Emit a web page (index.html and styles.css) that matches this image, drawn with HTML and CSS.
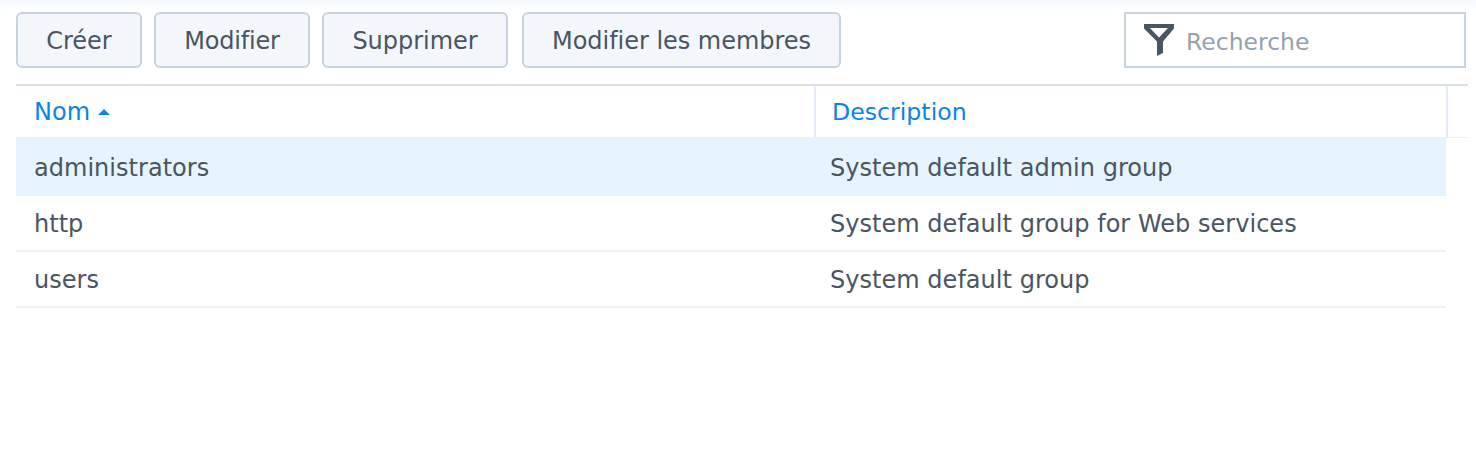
FILE: index.html
```html
<!DOCTYPE html>
<html lang="fr">
<head>
<meta charset="utf-8">
<title>Groupes</title>
<link rel="stylesheet" href="styles.css">
</head>
<body>
<div class="toolbar">
  <div class="buttons">
    <button class="btn btn-create">Créer</button>
    <button class="btn btn-edit">Modifier</button>
    <button class="btn btn-delete">Supprimer</button>
    <button class="btn btn-members">Modifier les membres</button>
  </div>
  <div class="search">
    <svg class="filter" viewBox="0 0 30 32" width="30" height="32"><path d="M0 0H30V4.500L19 17.500V29L13 32V17.500L0 4.500Z M6 4L15 13.500L24 4Z" fill="#4a5562" fill-rule="evenodd"/></svg>
    <span class="placeholder">Recherche</span>
  </div>
</div>
<div class="grid">
  <div class="head">
    <div class="hcell col-name">Nom<span class="sort"></span></div>
    <div class="hcell col-desc">Description</div>
    <div class="hcell col-end"></div>
  </div>
  <div class="row selected"><div class="col-name">administrators</div><div class="col-desc">System default admin group</div></div>
  <div class="row"><div class="col-name">http</div><div class="col-desc">System default group for Web services</div></div>
  <div class="row"><div class="col-name">users</div><div class="col-desc">System default group</div></div>
</div>
</body>
</html>
```
FILE: styles.css
```css
* { box-sizing: border-box; }
html, body { margin: 0; height: 456px; overflow: hidden; }
body {
  padding: 12px 8px 0 16px;
  background: linear-gradient(#f5f9fd 0, #fff 12px);
  font-family: "DejaVu Sans", sans-serif;
  font-size: 24px;
  color: #4a5562;
}
.toolbar { display: flex; justify-content: space-between; height: 56px; padding-right: 2px; }
.buttons { display: flex; gap: 12px; }
.btn {
  height: 56px;
  padding: 2px 0 0;
  border: 2px solid #c8d3e0;
  border-radius: 6px;
  background: #f3f7fb;
  font: inherit;
  letter-spacing: -0.03px;
  color: inherit;
}
.btn-create { width: 126px; }
.btn-edit { width: 156px; letter-spacing: -0.2px; }
.btn-delete { width: 186px; }
.btn-members { width: 319px; margin-left: 2px; }
.search {
  display: flex;
  align-items: center;
  gap: 12px;
  width: 342px;
  border: 2px solid #c8d3e0;
  padding-left: 18px;
  background: #fff;
}
.placeholder { color: #94a1b0; font-size: 23.500px; padding-top: 3px; }
.grid { margin-top: 16px; }
.head {
  display: flex;
  height: 54px;
  border-top: 2px solid #d9e2ec;
  border-bottom: 1px solid #eef2f7;
  color: #0a84e8;
}
.hcell { display: flex; align-items: center; padding-left: 18px; padding-top: 1px; }
.col-name { width: 799px; flex: none; }
.col-desc { flex: 1; }
.head .col-name { width: 798px; }
.head .col-desc { border-left: 2px solid #e3ecf6; padding-left: 16px; width: 632px; flex: none; font-size: 23.650px; }
.head .col-end { flex: 1; border-left: 2px solid #e3ecf6; }
.sort {
  width: 0;
  height: 0;
  margin-left: 8px;
  border: 6px solid transparent;
  border-top: 0;
  border-bottom-color: #0a84e8;
}
.row {
  display: flex;
  align-items: center;
  width: 1430px;
  height: 56px;
  padding-top: 2px;
  border-bottom: 2px solid #eef1f4;
  letter-spacing: 0.03px;
}
.row.selected { height: 58px; padding-top: 4px; }
.row .col-name { padding-left: 18px; }
.row .col-desc { padding-left: 15px; }
.selected { background: #e6f4fe; border-bottom-color: #e6f4fe; }
```
